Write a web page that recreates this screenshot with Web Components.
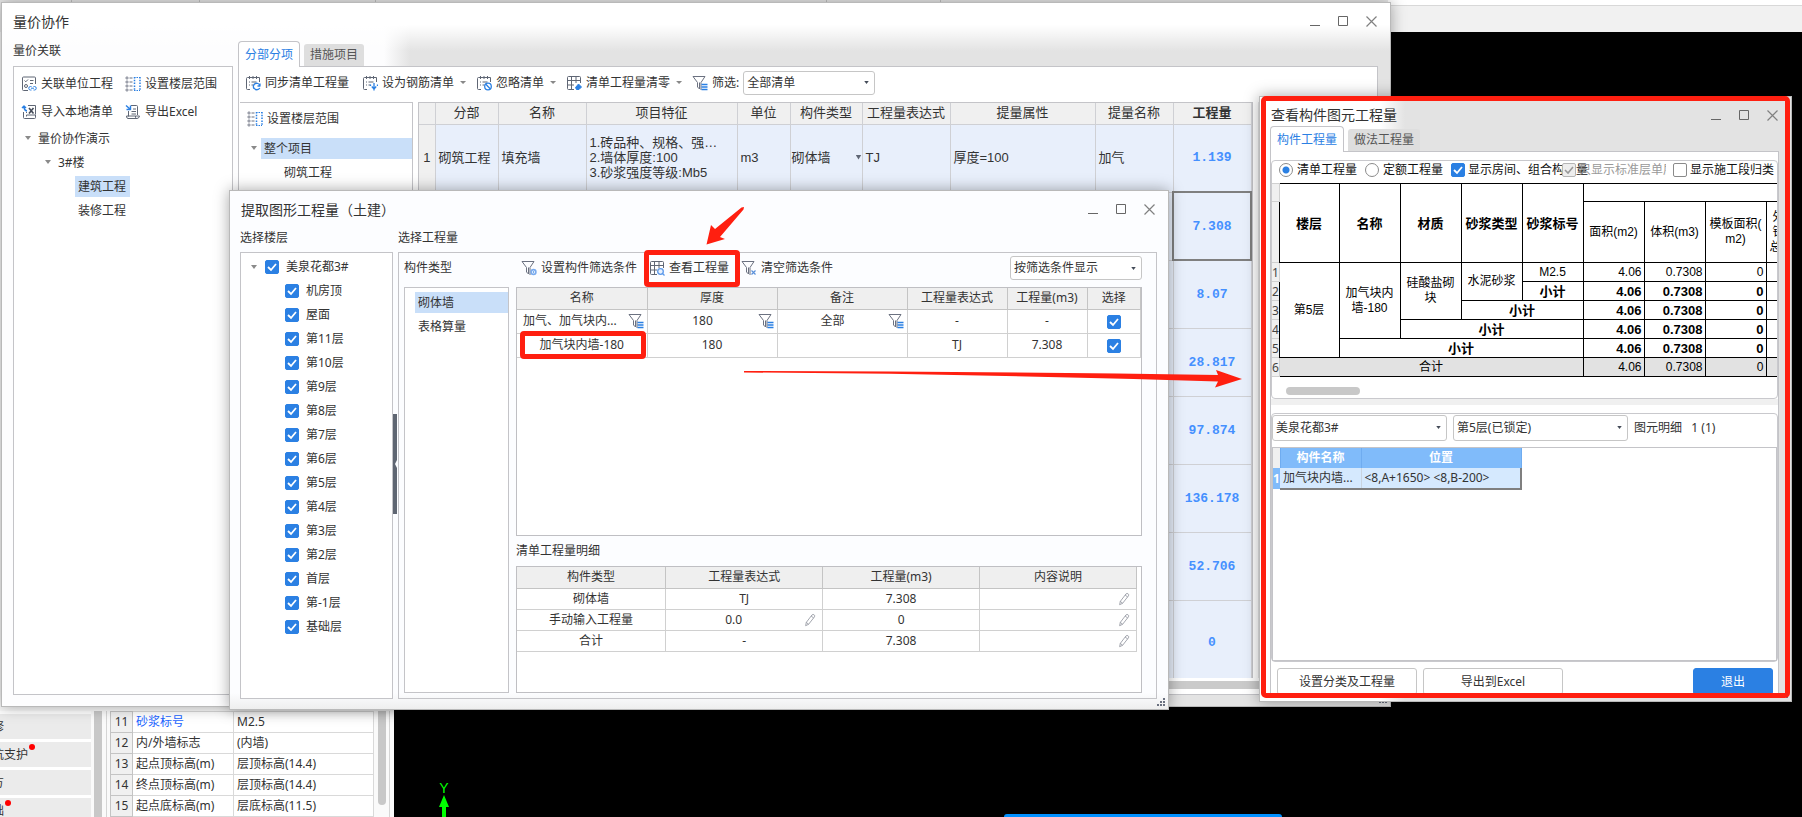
<!DOCTYPE html>
<html lang="zh-CN">
<head>
<meta charset="utf-8">
<title>量价协作</title>
<style>
html,body{margin:0;height:100%;overflow:hidden;background:#000}
body{font-family:"Noto Sans","Noto Sans CJK SC",sans-serif;font-size:12px;line-height:16px;color:#333}
</style>
</head>
<body>
<work-desktop></work-desktop>
<script>
const BASE = `
*{box-sizing:border-box}
:host{display:block}
button,select,input{font:inherit;color:inherit;margin:0}
button{background:none;border:0;padding:0}
table{border-collapse:collapse;table-layout:fixed;width:100%}
th,td{padding:0;font-weight:400;overflow:hidden;white-space:nowrap}
input[type=checkbox],input[type=radio]{appearance:none;width:14px;height:14px;flex:none;border:1px solid #8a8a8a;background:#fff;border-radius:2px}
input[type=checkbox]:checked{border-color:#2b80e3;background:#2b80e3 url("data:image/svg+xml,%3Csvg xmlns='http://www.w3.org/2000/svg' viewBox='0 0 12 12'%3E%3Cpath d='M2 6l3 3 5-6' fill='none' stroke='white' stroke-width='1.8'/%3E%3C/svg%3E")}
input[type=checkbox]:checked:disabled{border-color:#b5b5b5;background:#eee url("data:image/svg+xml,%3Csvg xmlns='http://www.w3.org/2000/svg' viewBox='0 0 12 12'%3E%3Cpath d='M2 6l3 3 5-6' fill='none' stroke='%23999' stroke-width='1.6'/%3E%3C/svg%3E")}
input[type=radio]{border-radius:50%}
input[type=radio]:checked{background:radial-gradient(circle,#2b80e3 0 3px,#fff 4px)}
`;
function define(name, css, html, after) {
  const t = document.createElement('template');
  customElements.define(name, class extends HTMLElement {
    connectedCallback() {
      if (this.shadowRoot) return;
      const root = this.attachShadow({ mode: 'open' });
      t.innerHTML = `<style>${BASE}${css}</style>${typeof html === 'function' ? html(this) : html}`;
      root.append(t.content.cloneNode(true));
      if (after) after(this, root);
    }
  });
}

/* ---------- icons ---------- */
const FUNNEL = '<path d="M1 1.500h12L9 7.500V15M1 1.500L5.500 7.500V12L7.500 14V7.500" stroke="#6b7180"/>';
const CAL = '<path d="M5 14.500H2.500Q1.500 14.500 1.500 13.500V3.500Q1.500 2.500 2.500 2.500H14.500V7M4.500 1v3M8 1v3M11.500 1v3" stroke="#5f6674"/><path d="M4 7h1M6.500 7h5M4 10h1M6.500 10h2" stroke="#5f6674"/>';
const GRID = '<path d="M8 14.500H2.500Q1.500 14.500 1.500 13.500V2.500Q1.500 1.500 2.500 1.500H13.500Q14.500 1.500 14.500 2.500V8M1.500 5.500H14.500M1.500 10H8M5.500 1.500V14.500M10 1.500V8" stroke="#5f6674"/>';
const ICONS = {
  link: '<path d="M7 14.500H2.500Q1.500 14.500 1.500 13.500V2Q1.500 1 2.500 1H13.500Q14.500 1 14.500 2V8" stroke="#5f6674"/><path d="M3.500 4.500l1.300 1.300L7 3.500M9 4.500h3.500M9 7.500h3" stroke="#5f6674"/><circle cx="5" cy="10" r="1.500" stroke="#5f6674"/><path d="M10.500 10.500H9.500a1.700 1.700 0 000 3.500h1M12.500 10.500h1a1.700 1.700 0 010 3.500h-1M10 12.200h3" stroke="#2b80e3"/>',
  floor: '<g stroke="#6b7180" stroke-width=".9"><circle cx="2" cy="2" r="1.100"/><circle cx="2" cy="6" r="1.100"/><circle cx="2" cy="10" r="1.100"/><circle cx="2" cy="14" r="1.100"/></g><path d="M4.500 2h3M4.500 6h3M4.500 10h3M4.500 14h3" stroke="#6b7180"/><path d="M9.500 1v14M15 1v14" stroke="#2b80e3" stroke-width="1.500" stroke-dasharray="1.500 1.300"/><path d="M9 1.500h6M9 14.500h6" stroke="#2b80e3" stroke-dasharray="1.500 1"/>',
  import: '<path d="M7 1.500h7.500v9M2.500 8v5.500q0 1 1 1h10q1 0 1-1V11h-9v1.500M5 8.500h1" stroke="#5f6674"/><path d="M8 4l4.500 5.500M12.500 4L8 9.500" stroke="#444b58" stroke-width="1.600"/><path d="M6 7Q3 6.500 3 3M1 4l2-2 2 2" stroke="#2b80e3" stroke-width="1.400"/>',
  export: '<path d="M6 1.500h5.500q1 0 1 1V11M3.500 7v5.500M1.500 12h9v1.500q0 1 1.500 1h-9q-1.500 0-1.500-2.500M12 14.500q2 0 2.500-2.500h-4M8 5h3M6.500 7.500H11M6.500 10H11" stroke="#5f6674"/><path d="M1 1.500l4 3.500M5.500 1.500V5.500H1.500" stroke="#2b80e3" stroke-width="1.400"/>',
  sync: CAL + '<path d="M14.800 10.500A3.300 3.300 0 109 13.500M15 8.500v2.500h-2.500M9 13a3.300 3.300 0 005.800 0" stroke="#2b80e3" stroke-width="1.300"/>',
  rebar: CAL + '<path d="M12 8v5M9.800 11.500L12 14l2.200-2.500M8.500 11v-1.500M15.500 11V9.500M12 14v1.500" stroke="#2b80e3" stroke-width="1.300"/>',
  ignore: CAL + '<circle cx="12" cy="11.500" r="3.300" stroke="#2b80e3" stroke-width="1.300"/><path d="M9.800 9.200l4.400 4.600" stroke="#2b80e3" stroke-width="1.300"/>',
  clear: GRID + '<path d="M9.500 12.500L12.500 9l3 3-2.500 2.500h-2.500z" fill="#2b80e3" stroke="#2b80e3"/>',
  view: GRID + '<circle cx="11.500" cy="11.500" r="2.800" stroke="#5a98ea" stroke-width="1.300" fill="#e8f1fd"/><path d="M13.500 13.500l2 2" stroke="#5a98ea" stroke-width="1.300"/>',
  filter: FUNNEL + '<path d="M9.500 9.500h6M9.500 12h6M9.500 14.500h6" stroke="#2b80e3" stroke-width="1.300"/>',
  fgear: FUNNEL + '<circle cx="12.500" cy="12" r="2.400" stroke="#7aabee" stroke-width="1.600" fill="#fff"/><circle cx="12.500" cy="12" r=".8" fill="#2b80e3" stroke="none"/>',
  fclear: FUNNEL + '<path d="M10.500 10.500l4 4M14.500 10.500l-4 4" stroke="#5a90da" stroke-width="1.200"/>',
  pen: '<path d="M3 14.500l.8-3.800L10.300 2.200q1.200-1 2.400-.1t.4 2.300L6.400 12.900zM9.300 3.500l2.800 2.100M3.800 10.700l2.600 2.200" stroke="#8b8f99" stroke-width=".9"/>'
};
define('app-icon', ':host{width:16px;height:16px;flex:none}svg{display:block;width:100%;height:100%}',
  el => `<svg viewBox="0 0 16 16" fill="none" stroke-linejoin="round" aria-hidden="true">${ICONS[el.getAttribute('name')]}</svg>`);

/* ---------- controls ---------- */
define('tool-button', `
:host{position:relative;flex:none}
button{display:flex;align-items:center;gap:4px;height:24px;white-space:nowrap}
.caret{width:6px;height:3px;margin-left:2px;background:#888;clip-path:polygon(0 0,100% 0,50% 100%)}
:host([plain]) button{padding-right:3px}
:host([marked])::after{content:"";position:absolute;inset:-6px -11px -7px -5px;border:5px solid #ff1f10;border-radius:4px}
`, el => `<button type="button"><app-icon name="${el.getAttribute('icon')}"></app-icon><slot></slot>${el.hasAttribute('menu') ? '<span class="caret"></span>' : ''}</button>`);

define('drop-select', `
select{appearance:none;width:100%;height:100%;border:1px solid #c6c6c6;border-radius:3px;padding:0 16px 0 3px;background:#fff url("data:image/svg+xml,%3Csvg xmlns='http://www.w3.org/2000/svg' viewBox='0 0 6 4'%3E%3Cpath d='M0 0h6L3 4z' fill='%23444b58'/%3E%3C/svg%3E") no-repeat right 5px center/5px 3px}
`, el => `<select aria-label="${el.getAttribute('label')}"><option>${el.getAttribute('value')}</option></select>`);

define('tab-strip', `
:host{height:25px;flex:none;position:relative;z-index:1}
div{display:flex;align-items:flex-end;gap:4px;height:26px}
button{font-size:12px;height:22px;padding:0 6px;background:#dedede;color:#555;border-radius:3px 3px 0 0;white-space:nowrap;margin-bottom:1px}
button.on{height:26px;margin:0;background:#fff;color:#2b80e3;border:1px solid #c4c4c8;border-bottom:0;border-radius:4px 4px 0 0}
`, el => `<div role="tablist">${el.getAttribute('tabs').split(',').map((t, i) => `<button type="button" role="tab" class="${i ? '' : 'on'}">${t}</button>`).join('')}</div>`);

/* Dialog frame: title bar, window buttons, size grip and a slot for the body */
define('dialog-frame', `
:host{position:absolute;display:flex;flex-direction:column;border:1px solid #b9b9b9;box-shadow:0 0 14px rgba(0,0,0,.35);background:#fdfdfe}
header{display:flex;align-items:center;height:var(--bar,38px);padding:var(--bar-top,0) 5px 1px 11px;flex:none}
h2{font-size:14px;line-height:20px;font-weight:400;margin:0;flex:1}
header button{width:28px;height:20px;display:grid;place-items:center}
svg{width:11px;height:11px;display:block}
.body{flex:1;min-height:0;display:flex}
.grip{position:absolute;right:2px;bottom:3px;width:9px;height:8px}
`, el => `<header><h2>${el.getAttribute('caption')}</h2>
<button type="button" aria-label="最小化"><svg viewBox="0 0 11 11"><path d="M0 9.500h10" stroke="#666"/></svg></button>
<button type="button" aria-label="最大化"><svg viewBox="0 0 11 11"><path d="M.5.5h9v9H.5z" fill="none" stroke="#666"/></svg></button>
<button type="button" aria-label="关闭"><svg viewBox="0 0 11 11"><path d="M.5.5l10 10M10.500.5l-10 10" stroke="#808080" stroke-width="1.200"/></svg></button></header>
<div class="body"><slot></slot></div>
<svg class="grip" viewBox="0 0 9 8"><path d="M6 0h2v2H6zM3 3h2v2H3zM6 3h2v2H6zM0 6h2v2H0zM3 6h2v2H3zM6 6h2v2H6z" fill="#6b7180"/></svg>`);

/* Tree rows: items are "level|flags|text"; a = arrow, s = selected, w = selection runs to the edge, c = tick box */
define('tree-list', `
ul{list-style:none;margin:0;padding:0}
li{display:flex;align-items:center;height:24px;padding-left:calc(var(--start,8px) + var(--lv)*20px);white-space:nowrap}
i{width:6px;height:4px;margin:0 4px 0 0;background:#8a8a8a;clip-path:polygon(0 0,100% 0,50% 100%);flex:none}
i.none{background:none}
span{height:21px;line-height:21px;padding:0 4px 0 3px}
.s{background:#c9dff9}.w{flex:1}
label{display:flex;align-items:center;gap:7px;padding-left:4px}
`, el => `<ul>${el.textContent.trim().split('\n').map(r => {
  const [lv, f, t] = r.trim().split('|');
  const cls = (f.includes('s') ? 's ' : '') + (f.includes('w') ? 'w' : '');
  return `<li style="--lv:${lv}"><i class="${f.includes('a') ? '' : 'none'}"></i>${f.includes('c') ? `<label><input type="checkbox" checked>${t}</label>` : `<span class="${cls}">${t}</span>`}</li>`;
}).join('')}</ul>`);

/* ---------- main bill table ---------- */
define('bill-grid', `
:host{flex:1;min-width:0;border:1px solid #c4c4c8;border-bottom:0;overflow:hidden;font-family:"Liberation Sans","Noto Sans CJK SC",sans-serif;font-size:13px;background:#fff}
th,td{border-right:1px solid #cfd0d4;border-bottom:1px solid #cfd0d4}
thead th{height:21px;line-height:18px;background:#f0f0f0;text-align:center}
tbody td{background:#e8effb;height:68px;padding:0 0 2px 3px;line-height:15px}
tbody th{background:#f0f0f0}
thead th:last-child{font-weight:700}
td.q{font:700 13px/15px "Liberation Mono",monospace;color:#4590ff;text-align:center;padding:0}
td.cur{border:2px solid #7f7f7f}
tr:last-child td{height:84px}
.type{display:flex;align-items:center;justify-content:space-between;margin-left:-2px}
.type i{width:6px;height:5px;background:#5f6674;clip-path:polygon(0 0,100% 0,50% 100%)}
`, () => {
  const q = ['7.308', '8.07', '28.817', '97.874', '136.178', '52.706', '0'];
  return `<table><colgroup><col style="width:16px"><col style="width:63px"><col style="width:88px"><col style="width:151px"><col style="width:53px"><col style="width:72px"><col style="width:88px"><col><col style="width:78px"><col style="width:78px"></colgroup>
<thead><tr><th></th><th>分部</th><th>名称</th><th>项目特征</th><th>单位</th><th>构件类型</th><th>工程量表达式</th><th>提量属性</th><th>提量名称</th><th>工程量</th></tr></thead>
<tbody><tr><th>1</th><td>砌筑工程</td><td>填充墙</td><td>1.砖品种、规格、强…<br>2.墙体厚度:100<br>3.砂浆强度等级:Mb5</td><td>m3</td><td><div class="type">砌体墙<i></i></div></td><td>TJ</td><td>厚度=100</td><td>加气</td><td class="q">1.139</td></tr>
${q.map((v, i) => `<tr><th></th>${'<td></td>'.repeat(8)}<td class="q${i ? '' : ' cur'}">${v}</td></tr>`).join('')}</tbody></table>`;
});

/* ---------- tables of the extraction dialog ---------- */
const GRIDCSS = `
:host{border:1px solid #bfbfc3;background:#fff;overflow:hidden}
th,td{border-right:1px solid #d0d0d0;border-bottom:1px solid #d0d0d0;text-align:center}
th{background:#efefef;height:21px;border-color:#c4c4c4}
.c{display:flex;align-items:center}
.c span{flex:1}
app-icon{margin-right:3px}
input{vertical-align:middle}
`;
define('filter-grid', GRIDCSS + `
td{height:24px}
td.red{overflow:visible}
.mark{display:block;position:relative}
.mark::after{content:"";position:absolute;inset:-6px 1px -6px 3px;border:5px solid #ff1f10;border-radius:4px}
.l{text-align:left;padding-left:6px}
`, `<table><colgroup><col style="width:130px"><col style="width:130px"><col style="width:130px"><col style="width:100px"><col style="width:80px"><col></colgroup>
<thead><tr><th>名称</th><th>厚度</th><th>备注</th><th>工程量表达式</th><th>工程量(m3)</th><th>选择</th></tr></thead><tbody>
<tr><td><div class="c"><span class="l">加气、加气块内...</span><app-icon name="filter"></app-icon></div></td><td><div class="c"><span>180</span><app-icon name="filter"></app-icon></div></td><td><div class="c"><span>全部</span><app-icon name="filter"></app-icon></div></td><td>-</td><td>-</td><td><input type="checkbox" checked aria-label="全选"></td></tr>
<tr><td class="red"><span class="mark">加气块内墙-180</span></td><td>180</td><td></td><td>TJ</td><td>7.308</td><td><input type="checkbox" checked aria-label="选择 加气块内墙-180"></td></tr></tbody></table>`);
define('detail-grid', GRIDCSS + `:host{padding-right:4px}td{height:21px}app-icon{width:14px;height:14px;margin:0 5px 0 2px}`,
`<table><colgroup><col style="width:24%"><col><col><col></colgroup>
<thead><tr><th>构件类型</th><th>工程量表达式</th><th>工程量(m3)</th><th>内容说明</th></tr></thead><tbody>
${[['砌体墙', 'TJ', '7.308'], ['手动输入工程量', '<div class="c"><span>0.0</span><app-icon name="pen"></app-icon></div>', '0'], ['合计', '-', '7.308']].map(r => `<tr>${r.map(c => `<td>${c}</td>`).join('')}<td><div class="c"><span></span><app-icon name="pen"></app-icon></div></td></tr>`).join('')}</tbody></table>`);

/* ---------- tables of the element dialog ---------- */
define('element-report', `
:host{overflow:hidden;font-family:"Liberation Sans","Noto Sans CJK SC",sans-serif;color:#000;background:#fff}
table{width:555px}
td,th{border:1px solid #000;text-align:center;height:19px;line-height:15px;white-space:normal}
th.n{border:1px solid #d0d0d0;border-left:0;background:#f0f0f0;color:#444;font-family:"Noto Sans",sans-serif;text-align:left;text-overflow:clip;white-space:nowrap}
thead th{font-size:13px;font-weight:700;white-space:nowrap}
thead .g{height:18px}
thead .s th{height:61px;font-size:12px;font-weight:400;white-space:normal}
td.v{text-align:right;padding-right:2px}
.b td.v,.b td.t{font-weight:700;font-size:13px}
.sum td{background:#e2e2e2}
`, () => {
  const v = () => `<td class="v">4.06</td><td class="v">0.7308</td><td class="v">0</td><td></td>`;
  return `<table><colgroup><col style="width:7px"><col style="width:60px">${'<col style="width:61px">'.repeat(8)}</colgroup><thead>
<tr><th class="n g"></th><th rowspan="2">楼层</th><th rowspan="2">名称</th><th rowspan="2">材质</th><th rowspan="2">砂浆类型</th><th rowspan="2">砂浆标号</th><th class="g" colspan="4"></th></tr>
<tr class="s"><th class="n"></th><th>面积(m2)</th><th>体积(m3)</th><th>模板面积(<br>m2)</th><th>外墙外侧<br>钢丝网片<br>总长度(m)</th></tr></thead><tbody>
<tr><th class="n">1</th><td rowspan="5">第5层</td><td rowspan="4">加气块内<br>墙-180</td><td rowspan="3">硅酸盐砌<br>块</td><td rowspan="2">水泥砂浆</td><td>M2.5</td>${v()}</tr>
<tr class="b"><th class="n">2</th><td class="t">小计</td>${v()}</tr>
<tr class="b"><th class="n">3</th><td class="t" colspan="2">小计</td>${v()}</tr>
<tr class="b"><th class="n">4</th><td class="t" colspan="3">小计</td>${v()}</tr>
<tr class="b"><th class="n">5</th><td class="t" colspan="4">小计</td>${v()}</tr>
<tr class="sum"><th class="n">6</th><td colspan="5">合计</td>${v()}</tr></tbody></table>`;
});
define('location-grid', `
:host{flex:1;min-height:0;border:1px solid #c4c4c8;background:#fff}
table{width:249px}
thead th{height:20px;background:#80bbfa;color:#fff;font-weight:700;border-right:1px solid #6facf0}
thead th:first-child{background:#f0f0f0}
td{height:21px;background:#d5e9fe;padding-left:3px;border-right:1px solid #c9d4e0;border-bottom:2px solid #7f7f7f}
td:last-child{border-right:2px solid #7f7f7f}
tbody th{background:#80bbfa;color:#fff;font-weight:700;text-overflow:clip}
`, `<table><colgroup><col style="width:7px"><col style="width:81px"><col></colgroup><thead><tr><th></th><th>构件名称</th><th>位置</th></tr></thead>
<tbody><tr><th>1</th><td>加气块内墙...</td><td>&lt;8,A+1650&gt; &lt;8,B-200&gt;</td></tr></tbody></table>`);

/* ---------- the three dialogs ---------- */
define('price-dialog', `
dialog-frame{inset:0;background:linear-gradient(#fff 22px,rgba(255,255,255,0) 48px),linear-gradient(to right,#fdfdfe 382px,#e3e3e3 408px)}
.cols{flex:1;display:flex;gap:5px;padding:0 12px 11px 11px;min-width:0}
.left{width:220px;display:flex;flex-direction:column}
.cap{height:25px;line-height:20px;flex:none}
.panel{flex:1;border:1px solid #c4c4c8;background:#fff;min-height:0}
.tools{display:grid;grid-template-columns:104px 1fr;padding:5px 0 2px 7px;row-gap:4px}
.right{flex:1;min-width:0;display:flex;flex-direction:column}
.right .panel{display:flex;flex-direction:column}
.bar{display:flex;align-items:center;gap:10px;height:31px;padding:0 6px;flex:none;margin-bottom:4px}
.bar label{display:flex;align-items:center;gap:4px}
drop-select{width:132px;height:24px}
.main{flex:1;display:flex;gap:5px;min-height:0;padding-left:1px}
.side{width:173px;border:1px solid #c4c4c8;border-left:0;overflow:hidden;flex:none}
.side tool-button{margin:4px 0 5px 7px}
.scroll{height:16px;background:#fff;flex:none;padding:3px 0 5px 180px}
.scroll i{display:block;height:8px;background:#cacaca}
.gutter{width:119px;flex:none;background:#e6e6e8}
`, `<dialog-frame caption="量价协作"><div class="cols">
<section class="left"><div class="cap">量价关联</div><div class="panel"><div class="tools">
<tool-button icon="link">关联单位工程</tool-button><tool-button icon="floor">设置楼层范围</tool-button>
<tool-button icon="import">导入本地清单</tool-button><tool-button icon="export">导出Excel</tool-button></div>
<tree-list style="--start:11px">0|a|量价协作演示
1|a|3#楼
2|s|建筑工程
2||装修工程</tree-list></div></section>
<section class="right"><tab-strip tabs="分部分项,措施项目"></tab-strip><div class="panel">
<div class="bar"><tool-button icon="sync" plain>同步清单工程量</tool-button><tool-button icon="rebar" menu>设为钢筋清单</tool-button><tool-button icon="ignore" menu>忽略清单</tool-button><tool-button icon="clear" menu>清单工程量清零</tool-button>
<label><app-icon name="filter"></app-icon>筛选:<drop-select label="筛选" value="全部清单"></drop-select></label></div>
<div class="main"><div class="side"><tool-button icon="floor">设置楼层范围</tool-button>
<tree-list style="--start:11px">0|asw|整个项目
1||砌筑工程
1||混凝土及钢筋混凝土</tree-list></div><bill-grid></bill-grid><div class="gutter"></div></div>
<div class="scroll"><i></i></div></div></section></div></dialog-frame>`);

define('extract-dialog', `
dialog-frame{inset:0;background:linear-gradient(to top,#eee,#fcfdff 16px)}
.cols{flex:1;display:flex;padding:0 11px 10px 10px;min-width:0}
.col{display:flex;flex-direction:column}
.cap{height:23px;line-height:18px;flex:none}
.panel{flex:1;border:1px solid #c4c4c8;min-height:0}
.floors{width:153px}.floors .panel{background:#fff;padding-top:2px}
.split{width:4px;margin-right:1px;display:flex;align-items:center;padding-top:0}
.split i{width:4px;height:100px;background:#5f6672;clip-path:polygon(0 0,100% 0,100% 46%,50% 50%,100% 54%,100% 100%,0 100%)}
.work{flex:1;min-width:0}
.work .panel{display:flex;gap:7px;padding:0 14px 5px 5px}
.types{width:105px}
.types .head,.bar{height:34px;flex:none;display:flex;align-items:center;padding-bottom:4px}
.list{flex:1;border:1px solid #c4c4c8;background:#fff;padding-top:2px}
.data{flex:1;min-width:0}
.bar{gap:12px;padding-left:5px}
.bar drop-select{margin-left:auto;width:132px;height:24px}
filter-grid{flex:1}
.sub{height:30px;line-height:30px;flex:none}
detail-grid{height:127px}
`, `<dialog-frame caption="提取图形工程量（土建）"><div class="cols">
<section class="col floors"><div class="cap">选择楼层</div><div class="panel"><tree-list style="--start:10px">0|ac|美泉花都3#
${['机房顶', '屋面', '第11层', '第10层', '第9层', '第8层', '第7层', '第6层', '第5层', '第4层', '第3层', '第2层', '首层', '第-1层', '基础层'].map(t => '1|c|' + t).join('\n')}</tree-list></div></section>
<div class="split"><i></i></div>
<section class="col work"><div class="cap">选择工程量</div><div class="panel">
<div class="col types"><div class="head">构件类型</div><div class="list"><tree-list style="--start:0px">0|sw|砌体墙
0||表格算量</tree-list></div></div>
<div class="col data"><div class="bar"><tool-button icon="fgear">设置构件筛选条件</tool-button><tool-button icon="view" marked>查看工程量</tool-button><tool-button icon="fclear">清空筛选条件</tool-button><drop-select label="显示方式" value="按筛选条件显示"></drop-select></div>
<filter-grid></filter-grid><div class="sub">清单工程量明细</div><detail-grid></detail-grid></div>
</div></section></div></dialog-frame>`);

define('element-dialog', `
dialog-frame{inset:0;--bar:29px;--bar-top:8px;background:linear-gradient(to right,#fff 120px,#e3e3e3 145px)}
:host::after{content:"";position:absolute;inset:0 2px 4px 2px;border:5px solid #ff1f10;border-radius:5px;pointer-events:none}
.wrap{flex:1;display:flex;flex-direction:column;padding:0 12px 4px 10px;min-width:0}
.panel{flex:1;min-height:0;border:1px solid #c4c4c8;border-bottom:0;background:#fff;padding-top:8px;display:flex;flex-direction:column;overflow:hidden}
.group{border:1px solid #c9c9cd;border-radius:4px;flex:none;overflow:hidden}
.opts{display:grid;grid-template-columns:86px 86px 111px 111px 1fr;align-items:center;padding:0 0 5px 7px;height:22px}
.opts label{display:flex;align-items:center;gap:3px;white-space:nowrap;min-width:0;color:#111}
.opts .r{gap:4px}
.opts .d{overflow:hidden;width:104px;color:#999}
.hs{height:21px;padding:10px 0 0 14px}
.hs i{display:block;width:74px;height:8px;border-radius:4px;background:#c8c8c8}
.strip{height:6px;background:#f0f0f0;margin-bottom:8px;flex:none}
.lower{flex:1;min-height:0;display:flex;flex-direction:column;border:1px solid #c9c9cd;border-radius:4px}
.pick{display:flex;align-items:center;gap:6px;height:33px;padding-bottom:6px;white-space:pre;flex:none}
.pick drop-select{width:175px;height:26px}
.btns{display:flex;gap:6px;padding:6px 5px 0 6px;height:35px;flex:none}
.btns button{width:140px;height:27px;border:1px solid #c6c6c6;border-radius:3px;background:#fff}
.btns .exit{margin-left:auto;width:80px;background:#2b80e3;border-color:#2b80e3;color:#fff}
`, `<dialog-frame caption="查看构件图元工程量"><div class="wrap"><tab-strip tabs="构件工程量,做法工程量"></tab-strip><div class="panel">
<div class="group"><div class="opts"><label class="r"><input type="radio" name="k" checked>清单工程量</label><label class="r"><input type="radio" name="k">定额工程量</label><label><input type="checkbox" checked>显示房间、组合构件量</label><label class="d"><input type="checkbox" checked disabled>只显示标准层单层量</label><label><input type="checkbox">显示施工段归类</label></div>
<element-report></element-report><div class="hs"><i></i></div></div>
<div class="strip"></div>
<div class="lower"><div class="pick"><drop-select label="工程" value="美泉花都3#"></drop-select><drop-select label="楼层" value="第5层(已锁定)"></drop-select><span>图元明细   1 (1)</span></div><location-grid></location-grid></div>
<div class="btns"><button type="button">设置分类及工程量</button><button type="button">导出到Excel</button><button type="button" class="exit">退出</button></div>
</div></div></dialog-frame>`);

/* ---------- modelling application behind the dialogs ---------- */
define('module-list', `
:host{width:91px;overflow:hidden;background:#fff}
nav{display:flex;flex-direction:column;gap:3px;padding-top:3px}
button{height:25px;background:#ebebeb;white-space:nowrap;display:flex;justify-content:flex-end;align-items:center}
span{position:relative}
.dot::after{content:"";position:absolute;right:-7px;top:-3px;width:6px;height:6px;border-radius:50%;background:#f00}
`, `<nav>${[['装修', 87, ''], ['基坑支护', 63, 'dot'], ['土方', 87, ''], ['基础', 87, 'dot']].map(([t, p, c]) => `<button type="button" style="padding-right:${p}px"><span class="${c}">${t}</span></button>`).join('')}</nav>`);
define('property-grid', `
:host{width:264px;background:#fff}
th,td{height:21px;border:1px solid #d9d9d9;text-align:left;padding-left:3px}
th{background:#f0f0f0;text-align:center;padding:0;border-color:#c4c4c4}
.k{color:#1a63ff}
`, `<table><colgroup><col style="width:22px"><col style="width:101px"><col></colgroup><tbody>
${[['11', '砂浆标号', 'M2.5'], ['12', '内/外墙标志', '(内墙)'], ['13', '起点顶标高(m)', '层顶标高(14.4)'], ['14', '终点顶标高(m)', '层顶标高(14.4)'], ['15', '起点底标高(m)', '层底标高(11.5)']].map((r, i) => `<tr><th>${r[0]}</th><td class="${i ? '' : 'k'}">${r[1]}</td><td>${r[2]}</td></tr>`).join('')}</tbody></table>`);

define('work-desktop', `
:host{position:relative;height:100vh;overflow:hidden;background:#000}
.app{height:100%;display:flex;flex-direction:column}
.ribbon{height:32px;flex:none;background:linear-gradient(#fff 5px,#d8d8d8 5px 6px,#f1f1f1 6px)}
.tabs{display:grid;grid-template-columns:72px 128px 176px 451px 114px 1fr;width:77%;height:32px;background:#eaeaea}
.tabs i{border-right:1px solid #c4c4c4}
.work{flex:1;display:flex;min-height:0}
.dock{width:394px;background:#fafafa;display:flex;align-items:flex-end;flex:none}
.low{height:106px;flex:1;display:flex;overflow:hidden}
.b1{width:8px;margin:0 4px 0 3px;background:#c8c8c8}
.b2{width:4px;border-left:1px solid #d5d5d5}
.b3{width:8px;height:94px;margin:0 3px 0 4px;background:#c8c8c8;border-radius:0 0 4px 4px}
.b4{width:1px;background:#d5d5d5}
.axis{position:absolute;left:438px;bottom:0;width:12px;color:#0f0;text-align:center;font:14px/14px "Liberation Sans",sans-serif}
.axis svg{display:block;width:12px;height:22px}
.task{position:absolute;left:1004px;bottom:0;width:278px;height:3px;background:#0090ff;border-radius:3px 3px 0 0}
price-dialog,extract-dialog,element-dialog{position:absolute}
price-dialog{inset:2px 411px 110px 1px}
extract-dialog{inset:190px 633px 107px 229px}
element-dialog{inset:96px 10px 115px 1259px}
.arrows{position:absolute;left:700px;top:200px;width:560px;height:200px;pointer-events:none}
`, `<div class="app"><div class="ribbon"><div class="tabs"><i></i><i></i><i></i><i></i><i></i></div></div><div class="work"><div class="dock"><div class="low">
<module-list></module-list><div class="b1"></div><div class="b2"></div><property-grid></property-grid><div class="b3"></div><div class="b4"></div></div></div></div></div>
<div class="axis">Y<svg viewBox="0 0 12 22"><path d="M6 0l5 12H8v10H4V12H1z" fill="#0f0"/></svg></div><div class="task"></div>
<price-dialog></price-dialog><extract-dialog></extract-dialog><element-dialog></element-dialog>
<svg class="arrows" viewBox="0 0 560 200"><path d="M6.500 44.500L11 25l4 4L41.500 7.500 44 7l-.5 2.500L20 37l5 2z" fill="#ff1f10"/><path d="M44 171Q280 171.500 518 175L516 170 542 179 515 187.500l3-6Q280 174 44 172.500z" fill="#ff1f10"/></svg>`);
</script>
</body>
</html>
